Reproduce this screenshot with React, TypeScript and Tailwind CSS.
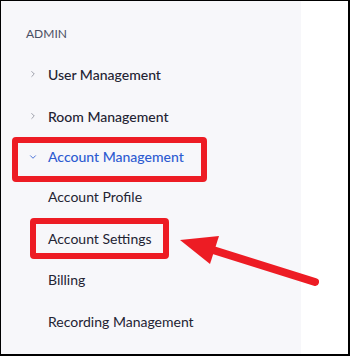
import { ChevronRight, ChevronDown } from "lucide-react";

const TOP_ITEMS = ["User Management", "Room Management"];
const SUB_ITEMS = ["Account Profile", "Account Settings", "Billing", "Recording Management"];

export default function App() {
  return (
    <div className="relative flex h-[356px] w-[350px] overflow-hidden border-t border-l border-r-2 border-b-2 border-black bg-white font-['Lato','Liberation_Sans',sans-serif]">
      <nav className="flex w-[300px] flex-col bg-[#f7f7fa] pt-[25px]">
        <p className="pl-[25px] text-[12px] leading-[16px] text-[#4a4f63]">ADMIN</p>
        <div className="mt-[11px] flex flex-col">
          {TOP_ITEMS.map((label) => (
            <div key={label} className="flex h-[42px] items-center">
              <ChevronRight className="ml-[27px] h-[10px] w-[10px] text-[#8a8d99]" strokeWidth={2} />
              <span className="ml-[10px] text-[14px] font-medium text-[#232333]">{label}</span>
            </div>
          ))}
          <div className="flex h-[39px] items-center">
            <ChevronDown className="ml-[27px] h-[10px] w-[10px] text-[#2d5bd1]" strokeWidth={2} />
            <span className="ml-[10px] text-[14px] font-medium text-[#2d5bd1]">Account Management</span>
          </div>
          {SUB_ITEMS.map((label) => (
            <div key={label} className="flex h-[41.5px] items-center pl-[47px]">
              <span className="text-[14px] text-[#232333]">{label}</span>
            </div>
          ))}
        </div>
      </nav>
      <main className="flex-1 bg-white" />

      {/* annotation boxes */}
      <div className="absolute left-[11px] top-[136px] h-[45px] w-[195px] rounded-[4px] border-[6px] border-[#ed1c24]" />
      <div className="absolute left-[29px] top-[217px] h-[41px] w-[139px] rounded-[4px] border-[6px] border-[#ed1c24]" />

      <svg className="absolute left-0 top-0" width="350" height="356" viewBox="0 0 350 356">
        <line x1="212" y1="249" x2="314" y2="281" stroke="#ed1c24" strokeWidth="8" strokeLinecap="round" />
        <polygon points="179,239 218,235 209,263" fill="#ed1c24" />
      </svg>
    </div>
  );
}
